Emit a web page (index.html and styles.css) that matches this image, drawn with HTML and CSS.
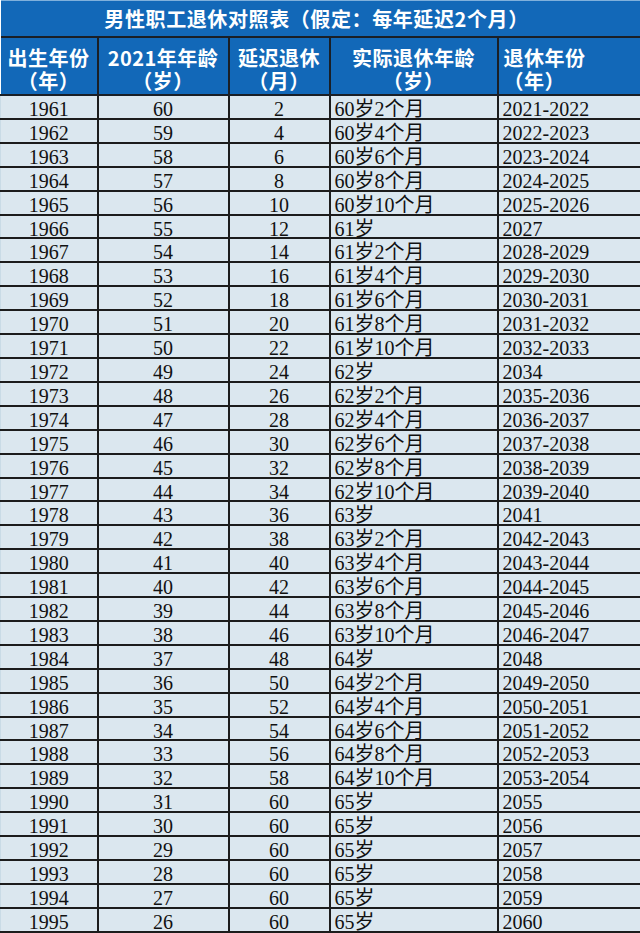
FILE: index.html
```html
<!DOCTYPE html>
<html lang="zh-CN">
<head>
<meta charset="utf-8">
<title>男性职工退休对照表</title>
<link rel="stylesheet" href="styles.css">
</head>
<body>
<table class="sheet">
  <colgroup>
    <col class="c1"><col class="c2"><col class="c3"><col class="c4"><col class="c5">
  </colgroup>
  <thead>
    <tr class="title-row"><th colspan="5" class="title">男性职工退休对照表（假定：每年延迟2个月）</th></tr>
    <tr class="head-row">
      <th><span class="hl">出生年份</span><span class="hl">（年）</span></th>
      <th><span class="hl">2021年年龄</span><span class="hl">（岁）</span></th>
      <th><span class="hl">延迟退休</span><span class="hl">（月）</span></th>
      <th><span class="hl">实际退休年龄</span><span class="hl">（岁）</span></th>
      <th class="left"><span class="hl">退休年份</span><span class="hl">（年）</span></th>
    </tr>
  </thead>
  <tbody>
    <tr><td>1961</td><td>60</td><td>2</td><td class="left">60岁2个月</td><td class="left">2021-2022</td></tr>
    <tr><td>1962</td><td>59</td><td>4</td><td class="left">60岁4个月</td><td class="left">2022-2023</td></tr>
    <tr><td>1963</td><td>58</td><td>6</td><td class="left">60岁6个月</td><td class="left">2023-2024</td></tr>
    <tr><td>1964</td><td>57</td><td>8</td><td class="left">60岁8个月</td><td class="left">2024-2025</td></tr>
    <tr><td>1965</td><td>56</td><td>10</td><td class="left">60岁10个月</td><td class="left">2025-2026</td></tr>
    <tr><td>1966</td><td>55</td><td>12</td><td class="left">61岁</td><td class="left">2027</td></tr>
    <tr><td>1967</td><td>54</td><td>14</td><td class="left">61岁2个月</td><td class="left">2028-2029</td></tr>
    <tr><td>1968</td><td>53</td><td>16</td><td class="left">61岁4个月</td><td class="left">2029-2030</td></tr>
    <tr><td>1969</td><td>52</td><td>18</td><td class="left">61岁6个月</td><td class="left">2030-2031</td></tr>
    <tr><td>1970</td><td>51</td><td>20</td><td class="left">61岁8个月</td><td class="left">2031-2032</td></tr>
    <tr><td>1971</td><td>50</td><td>22</td><td class="left">61岁10个月</td><td class="left">2032-2033</td></tr>
    <tr><td>1972</td><td>49</td><td>24</td><td class="left">62岁</td><td class="left">2034</td></tr>
    <tr><td>1973</td><td>48</td><td>26</td><td class="left">62岁2个月</td><td class="left">2035-2036</td></tr>
    <tr><td>1974</td><td>47</td><td>28</td><td class="left">62岁4个月</td><td class="left">2036-2037</td></tr>
    <tr><td>1975</td><td>46</td><td>30</td><td class="left">62岁6个月</td><td class="left">2037-2038</td></tr>
    <tr><td>1976</td><td>45</td><td>32</td><td class="left">62岁8个月</td><td class="left">2038-2039</td></tr>
    <tr><td>1977</td><td>44</td><td>34</td><td class="left">62岁10个月</td><td class="left">2039-2040</td></tr>
    <tr><td>1978</td><td>43</td><td>36</td><td class="left">63岁</td><td class="left">2041</td></tr>
    <tr><td>1979</td><td>42</td><td>38</td><td class="left">63岁2个月</td><td class="left">2042-2043</td></tr>
    <tr><td>1980</td><td>41</td><td>40</td><td class="left">63岁4个月</td><td class="left">2043-2044</td></tr>
    <tr><td>1981</td><td>40</td><td>42</td><td class="left">63岁6个月</td><td class="left">2044-2045</td></tr>
    <tr><td>1982</td><td>39</td><td>44</td><td class="left">63岁8个月</td><td class="left">2045-2046</td></tr>
    <tr><td>1983</td><td>38</td><td>46</td><td class="left">63岁10个月</td><td class="left">2046-2047</td></tr>
    <tr><td>1984</td><td>37</td><td>48</td><td class="left">64岁</td><td class="left">2048</td></tr>
    <tr><td>1985</td><td>36</td><td>50</td><td class="left">64岁2个月</td><td class="left">2049-2050</td></tr>
    <tr><td>1986</td><td>35</td><td>52</td><td class="left">64岁4个月</td><td class="left">2050-2051</td></tr>
    <tr><td>1987</td><td>34</td><td>54</td><td class="left">64岁6个月</td><td class="left">2051-2052</td></tr>
    <tr><td>1988</td><td>33</td><td>56</td><td class="left">64岁8个月</td><td class="left">2052-2053</td></tr>
    <tr><td>1989</td><td>32</td><td>58</td><td class="left">64岁10个月</td><td class="left">2053-2054</td></tr>
    <tr><td>1990</td><td>31</td><td>60</td><td class="left">65岁</td><td class="left">2055</td></tr>
    <tr><td>1991</td><td>30</td><td>60</td><td class="left">65岁</td><td class="left">2056</td></tr>
    <tr><td>1992</td><td>29</td><td>60</td><td class="left">65岁</td><td class="left">2057</td></tr>
    <tr><td>1993</td><td>28</td><td>60</td><td class="left">65岁</td><td class="left">2058</td></tr>
    <tr><td>1994</td><td>27</td><td>60</td><td class="left">65岁</td><td class="left">2059</td></tr>
    <tr><td>1995</td><td>26</td><td>60</td><td class="left">65岁</td><td class="left">2060</td></tr>
  </tbody>
</table>
</body>
</html>
```

FILE: styles.css
```css
html, body {
  margin: 0;
  padding: 0;
  background: #ffffff;
}

.sheet {
  width: 640px;
  table-layout: fixed;
  border-collapse: collapse;
  font-family: "Liberation Serif", "Noto Sans CJK SC", serif;
  font-size: 20px;
  color: #111111;
}

.c1 { width: 97px; }
.c2 { width: 131px; }
.c3 { width: 101px; }
.c4 { width: 168px; }
.c5 { width: 143px; }

.sheet th {
  background: #1268b8;
  color: #ffffff;
  font-family: "Noto Sans CJK SC", sans-serif;
  font-weight: 700;
  font-size: 20px;
  border: 2px solid #1a1f26;
  padding: 0;
}

.title-row th {
  height: 35px;
  border-top: 1px solid #7fb0dc;
  border-left: 0;
  border-right: 0;
  line-height: 24px;
  letter-spacing: 0.6px;
  padding-right: 8px;
}

.head-row th {
  height: 51px;
  padding-top: 5px;
  letter-spacing: 0.5px;
  text-align: center;
  vertical-align: middle;
}

.hl {
  display: block;
  font-size: 20px;
  line-height: 23px;
}

.head-row th:first-child { border-left: 0; }
.head-row th:last-child { border-right: 0; }

.sheet th.left {
  text-align: left;
  padding-left: 5px;
}

.sheet td {
  background: #dbe7ef;
  height: 16.9px;
  padding: 5px 0 0 0;
  line-height: 16.9px;
  border: 2px solid #1c1c1c;
  text-align: center;
  vertical-align: middle;
  white-space: nowrap;
}

.sheet td:first-child { border-left: 1px solid #c9dbe6; }
.sheet td:last-child { border-right: 1px solid #c9dbe6; }

.sheet td.left {
  text-align: left;
  padding-left: 4px;
}
```
